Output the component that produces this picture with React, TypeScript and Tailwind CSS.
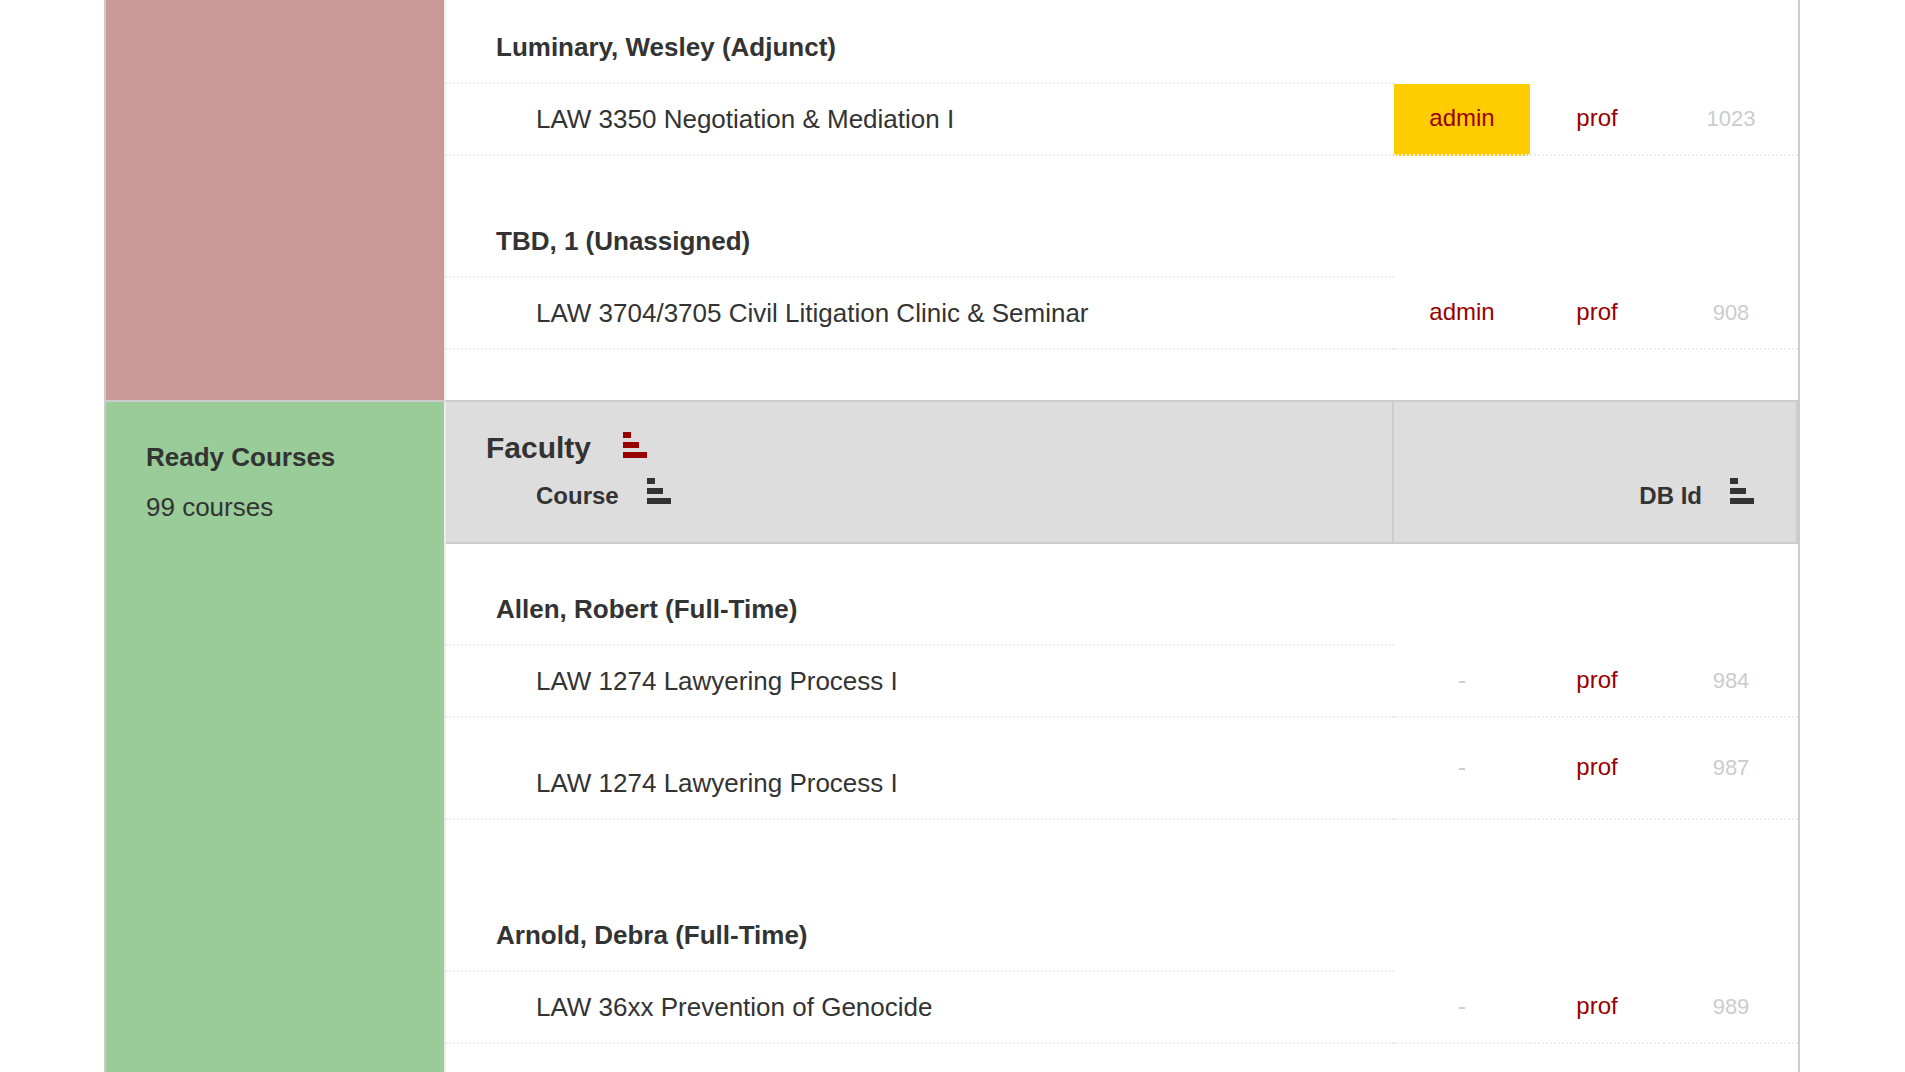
import { clsx } from 'clsx';
import type { ReactNode } from 'react';

type Course = {
  id: number;
  title: string;
  admin: 'none' | 'link' | 'flagged';
};

type Faculty = {
  name: string;
  spacing: string;
  courses: Course[];
};

const pendingFaculty: Faculty[] = [
  {
    name: 'Luminary, Wesley (Adjunct)',
    spacing: 'pt-8',
    courses: [{ id: 1023, title: 'LAW 3350 Negotiation & Mediation I', admin: 'flagged' }],
  },
  {
    name: 'TBD, 1 (Unassigned)',
    spacing: 'pt-[70px]',
    courses: [{ id: 908, title: 'LAW 3704/3705 Civil Litigation Clinic & Seminar', admin: 'link' }],
  },
];

const readyFaculty: Faculty[] = [
  {
    name: 'Allen, Robert (Full-Time)',
    spacing: 'pt-[50px]',
    courses: [
      { id: 984, title: 'LAW 1274 Lawyering Process I', admin: 'none' },
      { id: 987, title: 'LAW 1274 Lawyering Process I', admin: 'none' },
    ],
  },
  {
    name: 'Arnold, Debra (Full-Time)',
    spacing: 'pt-[100px]',
    courses: [{ id: 989, title: 'LAW 36xx Prevention of Genocide', admin: 'none' }],
  },
];

const SortIcon = () => (
  <svg width="24" height="26" viewBox="0 0 24 26" fill="currentColor" aria-hidden="true">
    <rect width="8" height="6" />
    <rect y="10" width="16" height="6" />
    <rect y="20" width="24" height="6" />
  </svg>
);

const SortButton = ({ label, active = false }: { label: string; active?: boolean }) => (
  <button
    type="button"
    className={clsx('flex items-baseline leading-[48px] font-bold', active ? 'gap-8 text-[30px]' : 'gap-7 text-2xl')}
  >
    {label}
    <span className={active ? 'text-[#990000]' : 'text-[#333333]'}>
      <SortIcon />
    </span>
  </button>
);

const LinkCell = ({ children, className }: { children: ReactNode; className?: string }) => (
  <td className={clsx('border-b-2 border-dotted border-[#eeeeee] pb-0.5 text-center text-2xl text-[#cccccc]', className)}>
    {children}
  </td>
);

const FacultyGroup = ({ faculty }: { faculty: Faculty }) => (
  <tbody>
    <tr>
      <th
        scope="rowgroup"
        className={clsx(
          'border-b-2 border-dotted border-[#eeeeee] pb-5 pl-[50px] text-left text-[26px] leading-[30px] font-bold',
          faculty.spacing,
        )}
      >
        {faculty.name}
      </th>
      <td colSpan={3}></td>
    </tr>
    {faculty.courses.map((course, index) => (
      <tr key={course.id}>
        <td
          className={clsx(
            'border-b-2 border-dotted border-[#eeeeee] pb-5 pl-[90px] text-[26px] leading-[30px]',
            index === 0 ? 'pt-5' : 'pt-[50px]',
          )}
        >
          {course.title}
        </td>
        <LinkCell className={course.admin === 'flagged' ? 'bg-[#ffcc00]' : undefined}>
          {course.admin === 'none' ? '-' : <a href="#admin" className="text-[#990000]">admin</a>}
        </LinkCell>
        <LinkCell>
          <a href="#prof" className="text-[#990000]">prof</a>
        </LinkCell>
        <LinkCell>
          <span className="text-[22px]">{course.id}</span>
        </LinkCell>
      </tr>
    ))}
  </tbody>
);

const CourseTable = ({ groups, header = false }: { groups: Faculty[]; header?: boolean }) => (
  <table className="w-full table-fixed border-separate border-spacing-0">
    <colgroup>
      <col />
      <col className="w-[136px]" />
      <col className="w-[134px]" />
      <col className="w-[134px]" />
    </colgroup>
    {header && (
      <thead>
        <tr className="bg-[#dddddd]">
          <th className="border-y-2 border-r-2 border-[#cccccc] py-[22px] pl-10">
            <SortButton label="Faculty" active />
            <div className="pl-[50px]">
              <SortButton label="Course" />
            </div>
          </th>
          <th colSpan={3} className="border-y-2 border-r-2 border-[#cccccc] py-[22px] pr-[42px] align-bottom">
            <div className="flex justify-end">
              <SortButton label="DB Id" />
            </div>
          </th>
        </tr>
      </thead>
    )}
    {groups.map((faculty) => (
      <FacultyGroup key={faculty.name} faculty={faculty} />
    ))}
  </table>
);

export default function App() {
  return (
    <main className="flex min-h-screen flex-col bg-white pr-[105px] pl-[104px] font-['Liberation_Sans',Arial,sans-serif] text-[#333333]">
      <section className="flex border-x-2 border-[#cccccc]">
        <div className="w-[340px] shrink-0 border-r-2 border-[#eeeeee] bg-[#cc9999]"></div>
        <div className="grow pb-[50px]">
          <CourseTable groups={pendingFaculty} />
        </div>
      </section>

      <section className="flex grow border-x-2 border-[#cccccc]">
        <div className="w-[340px] shrink-0 border-t-2 border-r-2 border-t-[#cccccc] border-r-[#eeeeee] bg-[#99cc99] pt-[30px] pl-10 text-[26px] leading-[50px]">
          <h2 className="font-bold">Ready Courses</h2>
          <p>99 courses</p>
        </div>
        <div className="grow">
          <CourseTable groups={readyFaculty} header />
        </div>
      </section>
    </main>
  );
}
